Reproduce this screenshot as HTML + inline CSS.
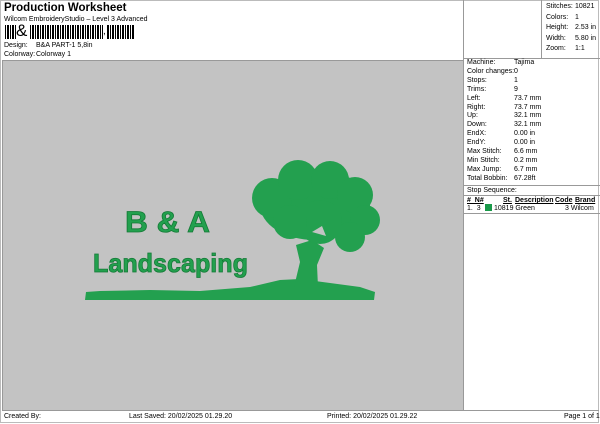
<!DOCTYPE html>
<html><head><style>
body{margin:0;width:600px;height:424px;background:#fff;font-family:"Liberation Sans",sans-serif;position:relative;overflow:hidden;color:#000}
.a{position:absolute;white-space:nowrap;font-size:7px;line-height:9px}
</style></head><body>
<div style="position:absolute;left:0;top:0;width:599px;height:423px;border:1px solid #bbb;box-sizing:border-box"></div>
<div class="a" style="left:4px;top:1px;font-size:11.5px;line-height:14px;font-weight:bold">Production Worksheet</div>
<div class="a" style="left:4px;top:15px">Wilcom EmbroideryStudio – Level 3 Advanced</div>
<div style="position:absolute;left:5px;top:25px;width:130px;height:14px;background:repeating-linear-gradient(90deg,#000 0 1px,#fff 1px 2px,#000 2px 4px,#fff 4px 5px)"></div>
<div style="position:absolute;left:16px;top:22px;width:14px;height:18px;background:#fff;font-size:17px;line-height:18px">&amp;</div>
<div style="position:absolute;left:103px;top:25px;width:4px;height:16px;background:#fff;font-size:10px;line-height:14px">,</div>
<div class="a" style="left:4px;top:41px">Design:</div><div class="a" style="left:36px;top:41px">B&amp;A PART-1 5,8in</div>
<div class="a" style="left:4px;top:50px">Colorway:</div><div class="a" style="left:36px;top:50px">Colorway 1</div>
<div style="position:absolute;left:2px;top:60px;width:461px;height:350px;background:#c3c3c3;border-top:1px solid #999;border-left:1px solid #999"></div>
<div style="position:absolute;left:463px;top:0;width:1px;height:410px;background:#999"></div>
<div style="position:absolute;left:541px;top:0;width:1px;height:58px;background:#999"></div>
<div style="position:absolute;left:463px;top:58px;width:137px;height:1px;background:#999"></div>
<div class="a" style="left:546px;top:2px;line-height:10.5px">Stitches:<br>Colors:<br>Height:<br>Width:<br>Zoom:</div>
<div class="a" style="left:575px;top:2px;line-height:10.5px">10821<br>1<br>2.53 in<br>5.80 in<br>1:1</div>
<div class="a" style="left:467px;top:59px;line-height:8.9px">Machine:<br>Color changes:<br>Stops:<br>Trims:<br>Left:<br>Right:<br>Up:<br>Down:<br>EndX:<br>EndY:<br>Max Stitch:<br>Min Stitch:<br>Max Jump:<br>Total Bobbin:</div>
<div class="a" style="left:514px;top:59px;line-height:8.9px">Tajima<br>0<br>1<br>9<br>73.7 mm<br>73.7 mm<br>32.1 mm<br>32.1 mm<br>0.00 in<br>0.00 in<br>6.6 mm<br>0.2 mm<br>6.7 mm<br>67.28ft</div>
<div style="position:absolute;left:463px;top:185px;width:137px;height:1px;background:#999"></div>
<div class="a" style="left:467px;top:186px">Stop Sequence:</div>
<div style="position:absolute;left:463px;top:195px;width:137px;height:1px;background:#999"></div>
<div class="a" style="left:467px;top:196px;font-weight:bold;text-decoration:underline">#&nbsp; N#</div>
<div class="a" style="left:503px;top:196px;font-weight:bold;text-decoration:underline">St.</div>
<div class="a" style="left:515px;top:196px;font-weight:bold;text-decoration:underline">Description</div>
<div class="a" style="left:555px;top:196px;font-weight:bold;text-decoration:underline">Code</div>
<div class="a" style="left:575px;top:196px;font-weight:bold;text-decoration:underline">Brand</div>
<div class="a" style="left:467px;top:204px">1.&nbsp; 3</div>
<div style="position:absolute;left:485px;top:204px;width:7px;height:7px;background:#1a9a4a"></div>
<div class="a" style="left:494px;top:204px">10819 Green</div>
<div class="a" style="left:565px;top:204px">3 Wilcom</div>
<div style="position:absolute;left:463px;top:213px;width:137px;height:1px;background:#999"></div>
<div style="position:absolute;left:2px;top:410px;width:597px;height:1px;background:#999"></div>
<div class="a" style="left:4px;top:412px">Created By:</div>
<div class="a" style="left:129px;top:412px">Last Saved: 20/02/2025 01.29.20</div>
<div class="a" style="left:327px;top:412px">Printed: 20/02/2025 01.29.22</div>
<div class="a" style="left:564px;top:412px">Page 1 of 1</div>
<svg style="position:absolute;left:0;top:0" width="600" height="424">
<g fill="#22a04e" font-family="Liberation Sans,sans-serif" font-weight="bold" stroke="#147a36" stroke-width="0.8">
<text x="125" y="232" font-size="30" textLength="85" lengthAdjust="spacingAndGlyphs">B &amp; A</text>
<text x="93" y="272" font-size="26" textLength="155" lengthAdjust="spacingAndGlyphs">Landscaping</text>
</g>
<g fill="#23a04f">
<path d="M85 300 L86 292 L100 291 L150 290 L200 291 L250 287 L280 280 L300 279 L330 283 L360 287 L375 292 L374 300 Z"/>
<path d="M294 287 L300 262 L296 245 L312 240 L324 248 L317 265 L318 287 Z"/>
<ellipse cx="315" cy="205" rx="55" ry="35"/>
<circle cx="272" cy="198" r="20"/>
<circle cx="298" cy="180" r="20"/>
<circle cx="330" cy="180" r="19"/>
<circle cx="355" cy="195" r="18"/>
<circle cx="365" cy="220" r="15"/>
<circle cx="350" cy="237" r="15"/>
<circle cx="320" cy="222" r="22"/>
<circle cx="290" cy="222" r="17"/>
</g>
<path d="M312 232 L322 226 L326 236 Z" fill="#c3c3c3"/>
</svg>
</body></html>
